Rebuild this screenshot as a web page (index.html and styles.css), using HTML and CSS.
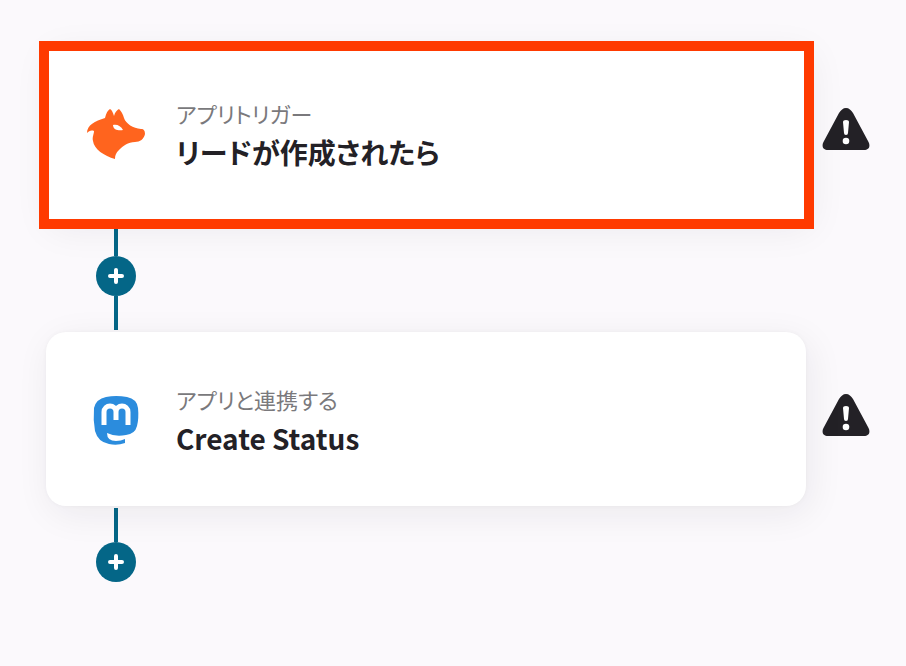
FILE: index.html
```html
<!DOCTYPE html>
<html lang="ja">

<head>
    <meta charset="UTF-8">
    <meta name="viewport" content="width=device-width, initial-scale=1.0">
    <title>フロー</title>
    <link rel="stylesheet" href="styles.css">
</head>

<body>
    <main class="flow">
        <div class="step">
            <section class="card highlight">
                <svg class="app-icon" viewBox="0 0 60 60" aria-hidden="true">
                    <path fill="#ff641e" d="M1 30C1 22 9 18 19 15C20 10 22 7 24 6C26 7 27 10 28 13C29 9 31 7 33 6C35 8 37 11 38 15C40 21 47 25 55 26C58 26 59 28 59 31C58 36 54 39 49 39C42 39 37 43 33 47C30 50 29 52 29 56C18 53 8 46 7 38C6 34 8 31 8 28C5 27 3 28 1 30Z" />
                    <path fill="#fff" d="M27 22C31 21 35 23 37 27C33 28 27 27 27 22Z" />
                </svg>
                <div class="text">
                    <p class="label">アプリトリガー</p>
                    <h2 class="title">リードが作成されたら</h2>
                </div>
            </section>
            <svg class="warning" viewBox="0 0 48 54" role="img" aria-label="警告">
                <path fill="#232126" d="M24 2C27 2 29 4 31 7L46 35C49 40 47 44 42 44H6C1 44 -1 40 2 35L17 7C19 4 21 2 24 2Z" />
                <path fill="#fff" d="M21 16Q21 14 24 14Q27 14 27 16L26 27Q26 29 24 29Q22 29 22 27Z" />
                <circle cx="24" cy="35" r="3.3" fill="#fff" />
            </svg>
        </div>

        <div class="connector">
            <span class="line"></span>
            <button class="add" type="button" aria-label="追加">
                <svg viewBox="0 0 16 16" aria-hidden="true">
                    <path d="M8 2V14M2 8H14" />
                </svg>
            </button>
            <span class="line"></span>
        </div>

        <div class="step">
            <section class="card">
                <svg class="app-icon" viewBox="0 0 60 60" aria-hidden="true">
                    <path fill="#2b8cdd" d="M20 8Q30 6 41 8Q51 10 52 19Q53 29 51 37Q49 45 40 46Q29 48 21 44Q21 52 30 52Q35 52 39 50V54Q31 57 23 55Q12 53 9 42Q7 31 8 19Q10 10 20 8Z" />
                    <path fill="none" stroke="#fff" stroke-width="5" d="M18 36V23C18 15 30 15 30 23V31M30 23C30 15 42 15 42 23V36" />
                </svg>
                <div class="text">
                    <p class="label">アプリと連携する</p>
                    <h2 class="title">Create Status</h2>
                </div>
            </section>
            <svg class="warning" viewBox="0 0 48 54" role="img" aria-label="警告">
                <path fill="#232126" d="M24 2C27 2 29 4 31 7L46 35C49 40 47 44 42 44H6C1 44 -1 40 2 35L17 7C19 4 21 2 24 2Z" />
                <path fill="#fff" d="M21 16Q21 14 24 14Q27 14 27 16L26 27Q26 29 24 29Q22 29 22 27Z" />
                <circle cx="24" cy="35" r="3.3" fill="#fff" />
            </svg>
        </div>

        <div class="connector">
            <span class="line"></span>
            <button class="add" type="button" aria-label="追加">
                <svg viewBox="0 0 16 16" aria-hidden="true">
                    <path d="M8 2V14M2 8H14" />
                </svg>
            </button>
        </div>
    </main>
</body>

</html>
```

FILE: styles.css
```css
* {
    margin: 0;
    padding: 0;
    box-sizing: border-box;
}

body {
    background: #fbf9fc;
    color: #232126;
    font-family: "Noto Sans CJK JP", sans-serif;
}

.flow {
    padding: 46px 36px 46px 46px;
}

.step {
    display: flex;
    align-items: center;
    gap: 16px;
}

.card {
    position: relative;
    flex: 1;
    display: flex;
    align-items: center;
    gap: 30px;
    padding: 48px 40px;
    background: #fff;
    border-radius: 20px;
    box-shadow: 0 0 4px rgba(35, 33, 38, .04), 4px 8px 36px rgba(35, 33, 38, .07);
}

.highlight {
    border-radius: 0;
}

/* red frame lying over the card */
.highlight::after {
    content: "";
    position: absolute;
    inset: -5px -8px -9px -7px;
    border: 10px solid #ff3a00;
}

.app-icon {
    width: 60px;
    height: 60px;
    flex: none;
}

.label {
    color: #7a797c;
    font-size: 22px;
    line-height: 38px;
    font-feature-settings: "palt";
}

.title {
    font-size: 28px;
    font-weight: 700;
    line-height: 40px;
    font-feature-settings: "palt";
}

.warning {
    width: 48px;
    height: 54px;
    flex: none;
}

.connector {
    display: flex;
    flex-direction: column;
    align-items: center;
    width: 40px;
    margin: 2px 50px;
}

.line {
    width: 4px;
    height: 34px;
    background: #046687;
}

.add {
    display: flex;
    align-items: center;
    justify-content: center;
    width: 40px;
    height: 40px;
    border: none;
    border-radius: 50%;
    background: #046687;
    cursor: pointer;
}

.add svg {
    width: 16px;
    height: 16px;
    fill: none;
    stroke: #fff;
    stroke-width: 4;
    stroke-linecap: round;
}
```
